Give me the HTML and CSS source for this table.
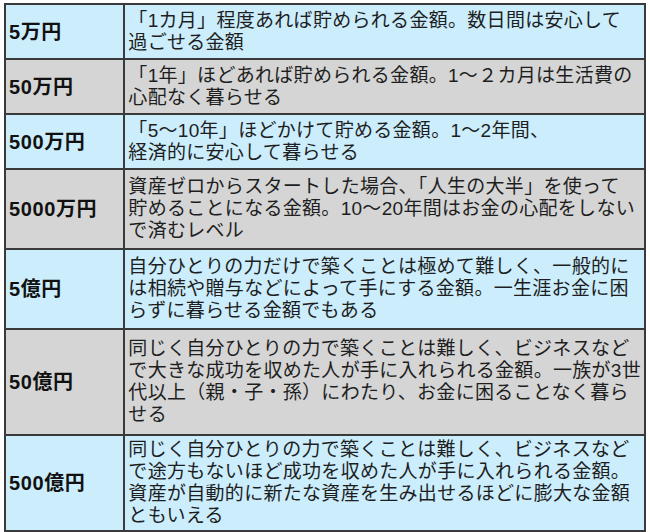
FILE: index.html
```html
<!DOCTYPE html>
<html lang="ja">
<head>
<meta charset="utf-8">
<title>金額の目安</title>
<link rel="stylesheet" href="styles.css">
</head>
<body>
<table class="amounts">
  <tr class="blue r2">
    <th>5万円</th>
    <td>「1カ月」程度あれば貯められる金額。数日間は安心して<br>過ごせる金額</td>
  </tr>
  <tr class="gray r2">
    <th>50万円</th>
    <td>「1年」ほどあれば貯められる金額。1〜２カ月は生活費の<br>心配なく暮らせる</td>
  </tr>
  <tr class="blue r2">
    <th>500万円</th>
    <td>「5〜10年」ほどかけて貯める金額。1〜2年間、<br>経済的に安心して暮らせる</td>
  </tr>
  <tr class="gray r3">
    <th>5000万円</th>
    <td>資産ゼロからスタートした場合、「人生の大半」を使って<br>貯めることになる金額。10〜20年間はお金の心配をしない<br>で済むレベル</td>
  </tr>
  <tr class="blue r3">
    <th>5億円</th>
    <td>自分ひとりの力だけで築くことは極めて難しく、一般的に<br>は相続や贈与などによって手にする金額。一生涯お金に困<br>らずに暮らせる金額でもある</td>
  </tr>
  <tr class="gray r4a">
    <th>50億円</th>
    <td>同じく自分ひとりの力で築くことは難しく、ビジネスなど<br>で大きな成功を収めた人が手に入れられる金額。一族が3世<br>代以上（親・子・孫）にわたり、お金に困ることなく暮ら<br>せる</td>
  </tr>
  <tr class="blue r4b">
    <th>500億円</th>
    <td>同じく自分ひとりの力で築くことは難しく、ビジネスなど<br>で途方もないほど成功を収めた人が手に入れられる金額。<br>資産が自動的に新たな資産を生み出せるほどに膨大な金額<br>ともいえる</td>
  </tr>
</table>
</body>
</html>
```

FILE: styles.css
```css
html, body {
  margin: 0;
  padding: 0;
  background: #ffffff;
}

body {
  padding: 3px 0 0 4px;
}

.amounts {
  border-collapse: collapse;
  width: 642px;
  font-family: "Liberation Sans", "Noto Sans CJK JP", sans-serif;
  font-size: 19px;
  line-height: 22px;
  color: #1e1e1e;
}

.amounts th,
.amounts td {
  border: 2px solid #3a3a3a;
  vertical-align: middle;
  text-align: left;
  white-space: nowrap;
  padding: 0 3px;
}

.amounts th {
  width: 114px;
  font-size: 20px;
  letter-spacing: 0.6px;
  font-weight: bold;
  color: #111111;
}

.amounts td {
  letter-spacing: 0.3px;
}

.blue {
  background: #cbedfc;
}

.gray {
  background: #d5d5d5;
}

.r2 { height: 55px; }
.r3 { height: 80px; }
.r4a { height: 106px; }
.r4b { height: 96px; }
```
